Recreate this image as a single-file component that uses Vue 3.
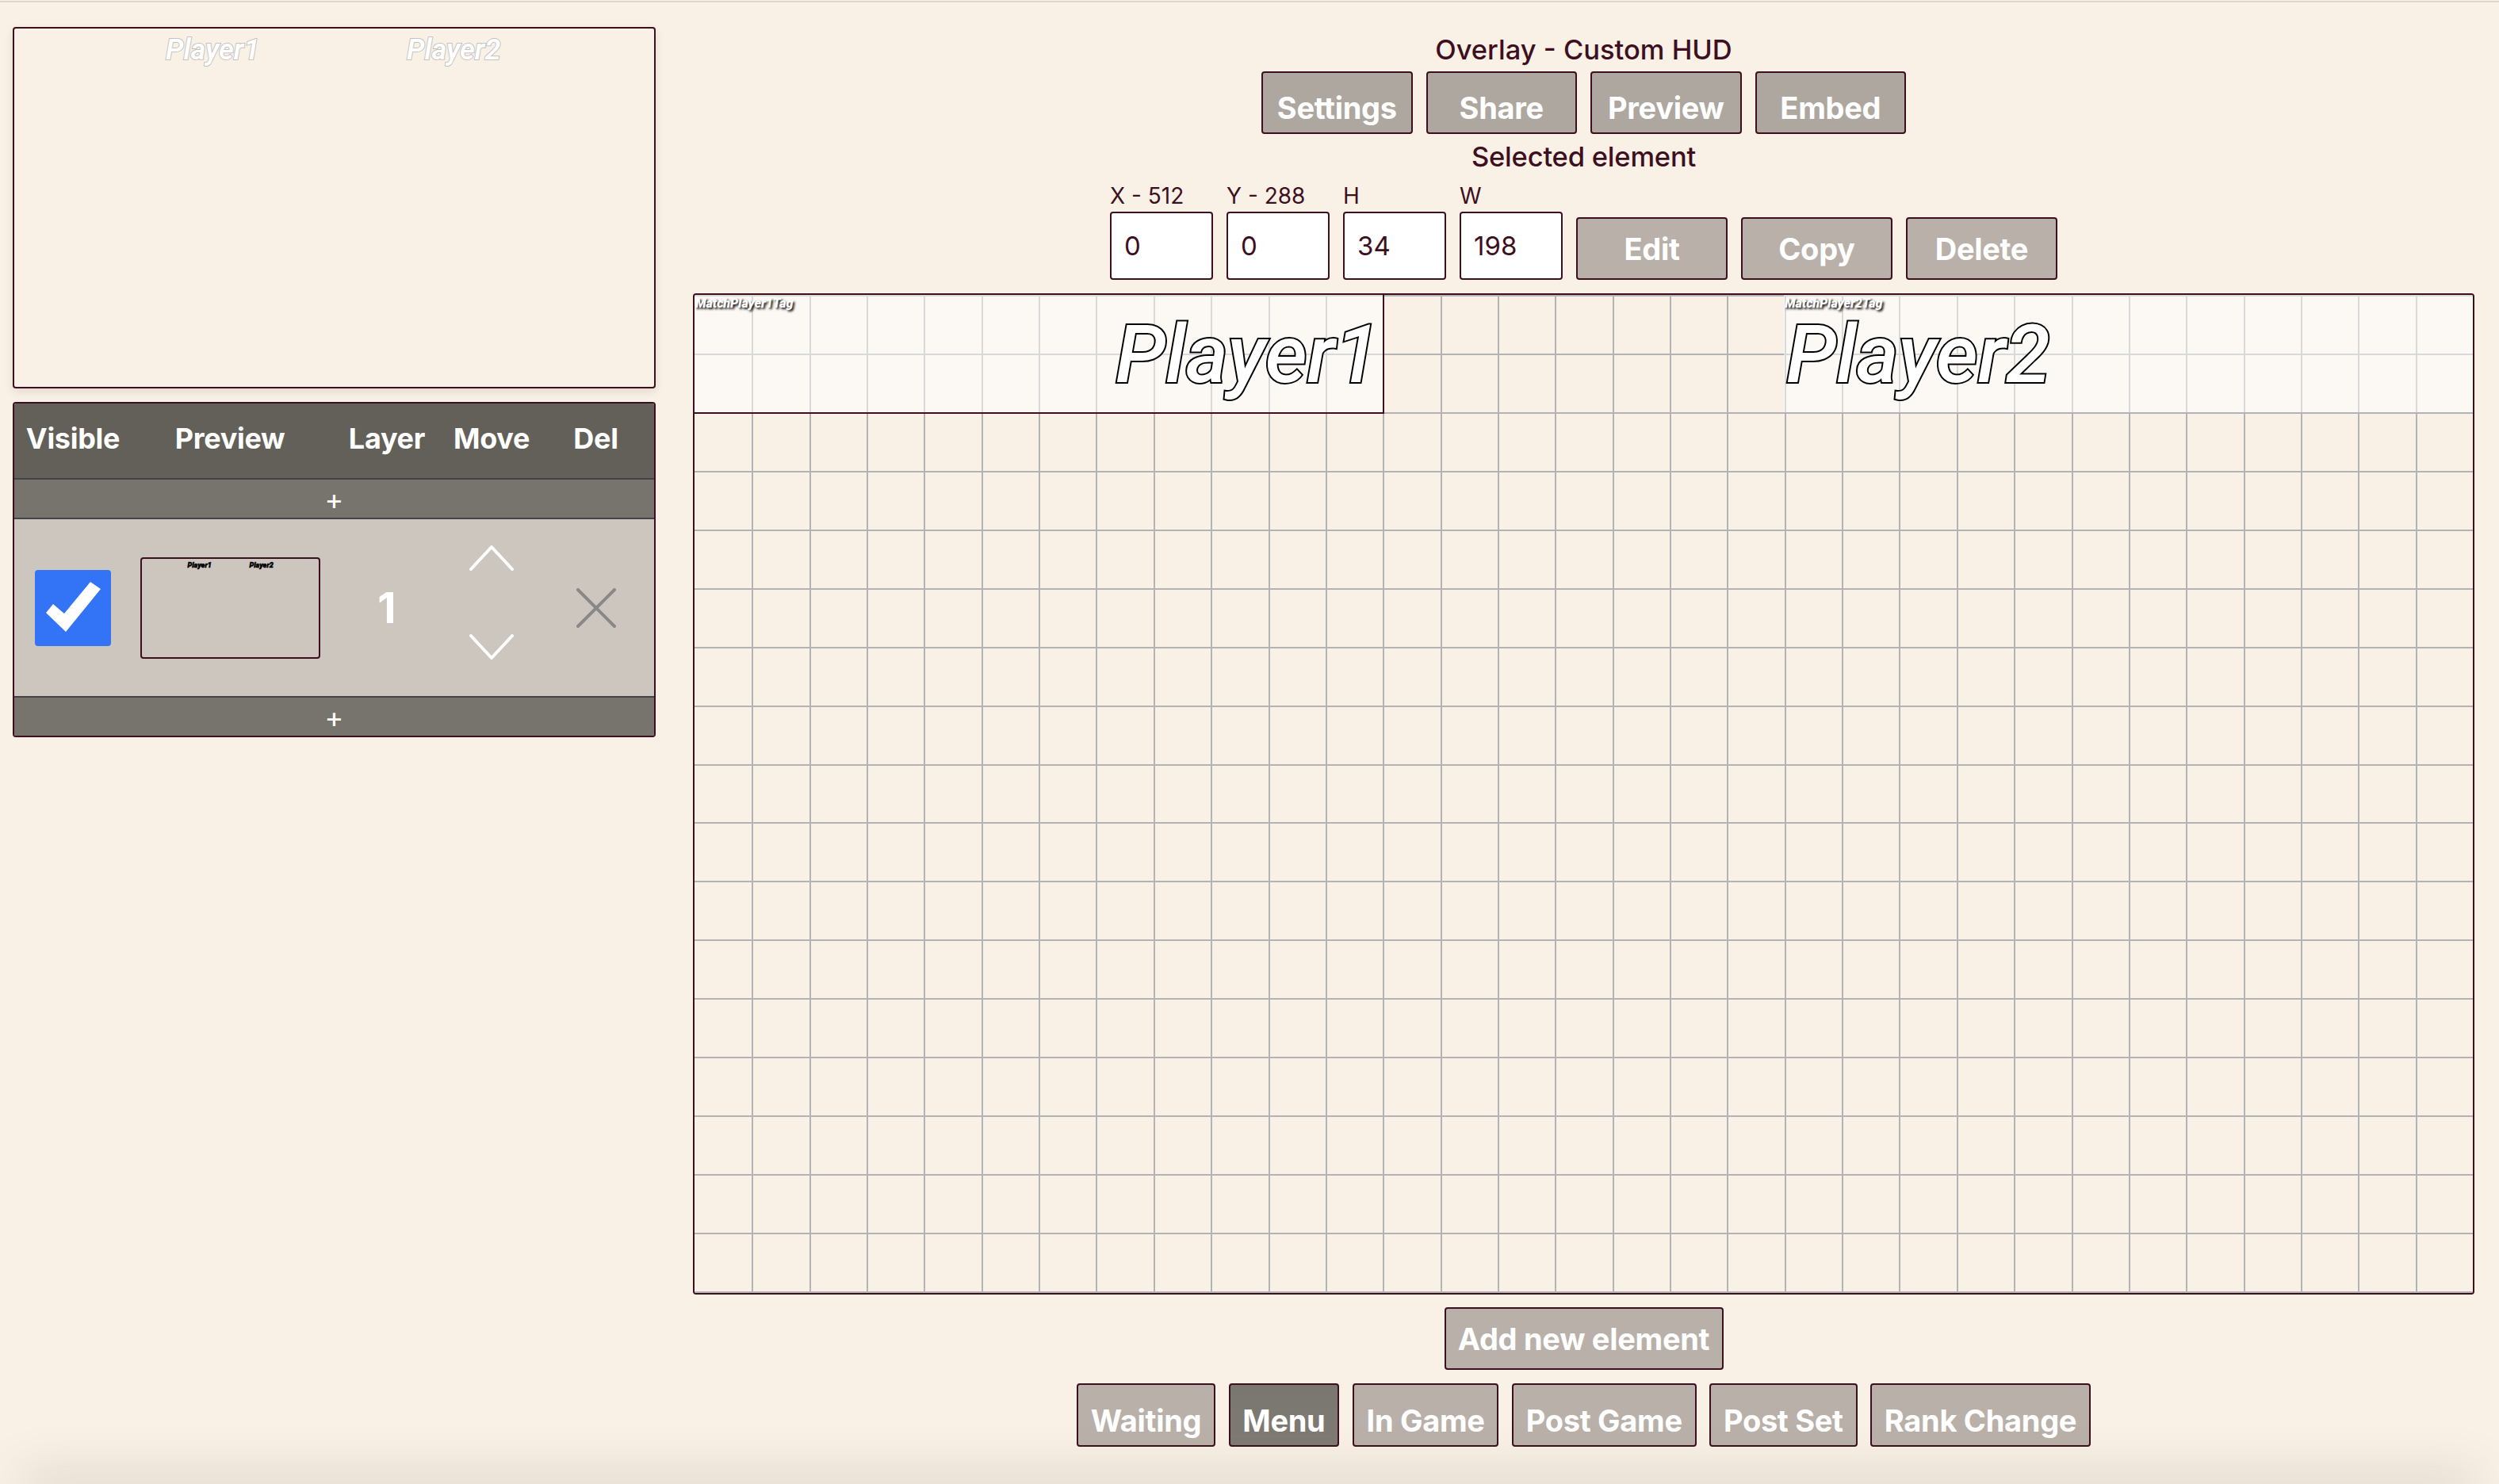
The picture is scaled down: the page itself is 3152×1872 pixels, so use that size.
<template>
  <div class="page">
    <div class="top-line"></div>
    <div class="editor">
      <aside class="side">
        <div class="preview-box">
          <span v-for="p in players" :key="p.name" class="preview-name" :class="p.cls">{{ p.name }}</span>
        </div>

        <div class="layers">
          <div class="layer-head layer-grid">
            <span>Visible</span>
            <span>Preview</span>
            <span>Layer</span>
            <span>Move</span>
            <span>Del</span>
          </div>
          <div class="add-bar">+</div>
          <div class="layer-row layer-grid">
            <div class="check">
              <svg width="96" height="96" viewBox="0 0 96 96">
                <polygon points="14,54 23,43 37,55 70,15 83,24 39,78" fill="#fff" />
              </svg>
            </div>
            <div class="mini">
              <span v-for="p in players" :key="p.name" class="mini-name">{{ p.name }}</span>
            </div>
            <span class="layer-num">1</span>
            <div class="move">
              <svg width="58" height="32" viewBox="0 0 58 32">
                <path d="M3 30 L29 2 L55 30" class="chev" />
              </svg>
              <svg width="58" height="32" viewBox="0 0 58 32">
                <path d="M3 2 L29 30 L55 2" class="chev" />
              </svg>
            </div>
            <svg class="del" width="50" height="50" viewBox="0 0 50 50">
              <path d="M2 2 L48 48 M48 2 L2 48" />
            </svg>
          </div>
          <div class="add-bar last">+</div>
        </div>
      </aside>

      <main class="main">
        <div class="title">Overlay - Custom HUD</div>
        <div class="btn-row top-btns">
          <button v-for="b in topButtons" :key="b" class="btn dark-btn">{{ b }}</button>
        </div>
        <div class="selected">Selected element</div>

        <div class="fields">
          <label v-for="f in fields" :key="f.label" class="field">
            <span>{{ f.label }}</span>
            <input type="text" :value="f.value" />
          </label>
          <button v-for="b in elementButtons" :key="b" class="btn">{{ b }}</button>
        </div>

        <div class="canvas">
          <div class="grid">
            <div v-for="n in 527" :key="n" class="cell"></div>
          </div>
          <div class="element selected-el el-one">
            <span class="tag">MatchPlayer1Tag</span>
            <span class="big-name">Player1</span>
          </div>
          <div class="element el-two">
            <span class="tag">MatchPlayer2Tag</span>
            <span class="big-name">Player2</span>
          </div>
        </div>

        <button class="btn add-new">Add new element</button>
        <div class="btn-row scenes">
          <button v-for="s in scenes" :key="s" class="btn" :class="{ active: s === activeScene }">{{ s }}</button>
        </div>
      </main>
    </div>
    <div class="bottom-fade"></div>
  </div>
</template>

<script setup>
import { ref } from 'vue'

const players = [
  { name: 'Player1', cls: 'p1' },
  { name: 'Player2', cls: 'p2' }
]
const topButtons = ['Settings', 'Share', 'Preview', 'Embed']
const elementButtons = ['Edit', 'Copy', 'Delete']
const fields = [
  { label: 'X - 512', value: '0' },
  { label: 'Y - 288', value: '0' },
  { label: 'H', value: '34' },
  { label: 'W', value: '198' }
]
const scenes = ['Waiting', 'Menu', 'In Game', 'Post Game', 'Post Set', 'Rank Change']
const activeScene = ref('Menu')
</script>

<style>
html,
body {
  margin: 0;
  background: #f9f1e6;
}
</style>

<style scoped>
.page {
  position: relative;
  height: 1872px;
  overflow: hidden;
  background: #f9f1e6;
  font-family: Inter, "Liberation Sans", sans-serif;
  color: #3d0f1f;
}

.top-line {
  height: 3px;
  box-sizing: border-box;
  border-bottom: 2px solid #dcd7cd;
}

.editor {
  display: flex;
  align-items: flex-start;
  gap: 47px;
  padding: 31px 31px 0 16px;
}

.side {
  width: 811px;
  flex: none;
}

.preview-box {
  position: relative;
  height: 456px;
  box-sizing: border-box;
  border: 2px solid #3d0f1f;
  border-radius: 4px;
  box-shadow: 0 4px 12px rgba(0, 0, 0, 0.1);
}

.preview-name {
  position: absolute;
  top: 3px;
  font-family: Roboto, sans-serif;
  font-style: italic;
  font-weight: 600;
  font-size: 36px;
  line-height: 48px;
  color: #fff;
  -webkit-text-stroke: 2px #c4c2c0;
  paint-order: stroke fill;
}

.p1 {
  left: 191px;
}

.p2 {
  left: 495px;
}

.layers {
  margin-top: 17px;
  border: 2px solid #3d0f1f;
  border-radius: 4px;
  overflow: hidden;
  color: #fff;
}

.layer-grid {
  display: grid;
  grid-template-columns: 148px 248px 148px 116px 147px;
  align-items: center;
  justify-items: center;
}

.layer-head {
  height: 96px;
  box-sizing: border-box;
  padding-bottom: 6px;
  background: #63605a;
  font-size: 36px;
  font-weight: 650;
  letter-spacing: -0.3px;
  border-bottom: 2px solid #45434a;
}

.add-bar {
  height: 48px;
  background: #77746d;
  border-bottom: 2px solid #45434a;
  font-size: 36px;
  line-height: 50px;
  text-align: center;
}

.add-bar.last {
  border-bottom: none;
}

.layer-row {
  height: 223px;
  background: #cdc6bf;
  border-bottom: 2px solid #45434a;
}

.check {
  width: 96px;
  height: 96px;
  background: #3374f6;
  border-radius: 4px;
}

.check svg,
.del {
  display: block;
}

.mini {
  box-sizing: border-box;
  width: 227px;
  height: 128px;
  border: 2px solid #3d0f1f;
  border-radius: 4px;
  display: flex;
  gap: 50px;
  padding-left: 58px;
  color: #000;
  font-family: Roboto, sans-serif;
  font-style: italic;
  font-weight: 900;
  font-size: 9px;
  line-height: 16px;
  -webkit-text-stroke: 0.5px #000;
}

.mini-name {
  display: block;
  width: 28px;
}

.layer-num {
  font-size: 54px;
  font-weight: 700;
}

.move {
  display: flex;
  flex-direction: column;
  gap: 80px;
  margin-bottom: 14px;
}

.move svg {
  display: block;
}

.chev {
  fill: none;
  stroke: #fff;
  stroke-width: 4;
  stroke-linecap: round;
  stroke-linejoin: round;
}

.del path {
  fill: none;
  stroke: #888;
  stroke-width: 4;
  stroke-linecap: round;
}

.main {
  flex: 1;
  min-width: 0;
  display: flex;
  flex-direction: column;
  align-items: center;
}

.title {
  margin-top: 7px;
  font-size: 34.5px;
  font-weight: 450;
  line-height: 44px;
}

.btn-row {
  display: flex;
  gap: 17px;
}

.top-btns {
  margin-top: 5px;
}

.btn {
  box-sizing: border-box;
  height: 79px;
  padding: 12px 16px 0;
  border: 2px solid #3d0f1f;
  border-radius: 4px;
  background: #b9b1a9;
  color: #fff;
  font-family: inherit;
  font-size: 38px;
  font-weight: 650;
  letter-spacing: -0.3px;
  line-height: 48px;
}

.dark-btn {
  width: 190.5px;
  background: #aea79f;
}

.selected {
  margin-top: 7px;
  font-size: 34.5px;
  font-weight: 550;
  letter-spacing: -0.2px;
  line-height: 44px;
}

.fields {
  display: flex;
  align-items: flex-end;
  gap: 17px;
  margin-top: 10px;
}

.fields .btn {
  width: 191px;
  padding: 0;
}

.field {
  display: flex;
  flex-direction: column;
  width: 130px;
  font-size: 28px;
  line-height: 34px;
}

.field input {
  box-sizing: border-box;
  width: 130px;
  height: 86px;
  margin-top: 3px;
  padding: 0 16px;
  border: 2px solid #3d0f1f;
  border-radius: 4px;
  background: #fff;
  color: #3d0f1f;
  font-family: inherit;
  font-size: 33px;
}

.canvas {
  position: relative;
  box-sizing: border-box;
  width: 100%;
  height: 1263px;
  margin-top: 17px;
  border: 2px solid #3d0f1f;
  border-radius: 4px;
  overflow: hidden;
}

.grid {
  display: grid;
  grid-template-columns: repeat(31, 1fr);
  grid-template-rows: repeat(17, 1fr);
  height: 100%;
  box-sizing: border-box;
  border-top: 2px solid #b3b3b5;
}

.cell {
  box-sizing: border-box;
  border-left: 2px solid #b3b3b5;
  border-bottom: 2px solid #b3b3b5;
}

.cell:nth-child(31n + 1) {
  border-left: none;
}

.element {
  position: absolute;
  top: 0;
  height: 148px;
  box-sizing: border-box;
  background: rgba(255, 255, 255, 0.5);
}

.el-one {
  left: 0;
  width: 870px;
  height: 150px;
  border-right: 2px solid #3d0f1f;
  border-bottom: 2px solid #3d0f1f;
  text-align: right;
}

.el-two {
  left: 1374px;
  right: 0;
}

.tag {
  position: absolute;
  top: 1px;
  left: 1px;
  font-family: Roboto, sans-serif;
  font-style: italic;
  font-weight: 900;
  font-size: 16px;
  line-height: 20px;
  color: #fff;
  text-shadow: 2px 2px 3px #000;
}

.big-name {
  position: absolute;
  top: 17px;
  font-family: Roboto, sans-serif;
  font-style: italic;
  font-weight: 500;
  font-size: 102px;
  line-height: 117px;
  color: #fff;
  -webkit-text-stroke: 4px #000;
  paint-order: stroke fill;
}

.el-one .big-name {
  right: 4px;
}

.el-two .big-name {
  left: 3px;
}

.add-new {
  margin-top: 16px;
  width: 352px;
  padding: 0;
}

.scenes {
  margin-top: 17px;
  gap: 16.5px;
}

.scenes .btn {
  height: 80px;
  padding: 14px 15.8px 0;
}

.scenes .active {
  background: linear-gradient(#7a7670, #7f7b74);
}

.bottom-fade {
  position: absolute;
  left: 40px;
  right: 40px;
  top: 100%;
  height: 10px;
  box-shadow: 0 0 60px 10px rgba(110, 100, 85, 0.25);
  pointer-events: none;
}
</style>
